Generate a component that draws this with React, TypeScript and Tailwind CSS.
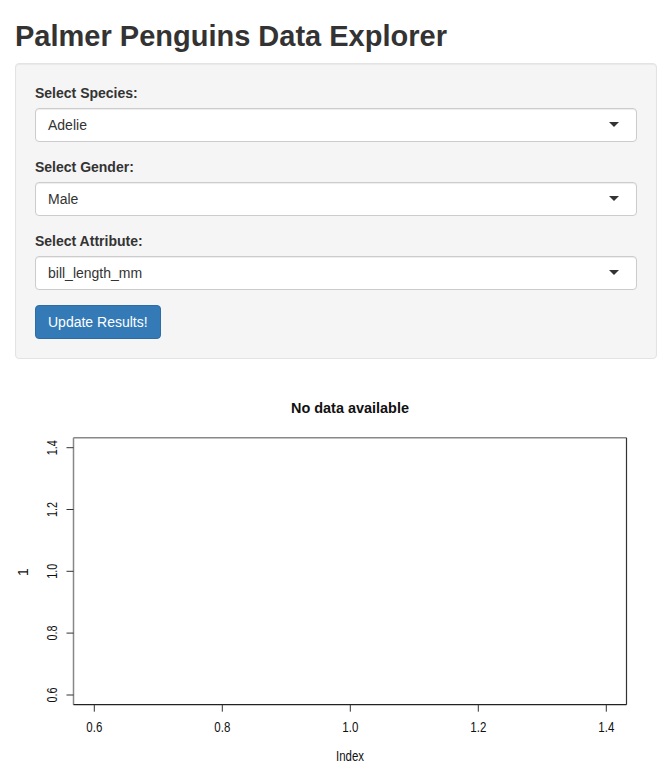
import React, { useState } from 'react';

const font = { fontFamily: '"Liberation Sans", Arial, sans-serif' };

const SelectBox: React.FC<{ label: string; value: string }> = ({ label, value }) => (
    <div className="mb-[15px]">
        <label className="block mb-[5px] text-[14px] leading-[20px] font-bold text-[#333]">{label}</label>
        <div className="relative h-[34px] bg-white border border-[#ccc] rounded-[4px] px-[12px] py-[6px] shadow-[inset_0_1px_1px_rgba(0,0,0,0.075)]">
            <span className="block text-[14px] leading-[20px] text-[#333]">{value}</span>
            <span className="absolute right-[17px] top-1/2 -mt-[3px] w-0 h-0 border-t-[5px] border-t-[#333] border-x-[5px] border-x-transparent"></span>
        </div>
    </div>
);

const yTicks = [
    { y: 68.7, t: '1.4' },
    { y: 130.5, t: '1.2' },
    { y: 192.3, t: '1.0' },
    { y: 254.1, t: '0.8' },
    { y: 316, t: '0.6' },
];

const xTicks = [
    { x: 79.3, t: '0.6' },
    { x: 207.3, t: '0.8' },
    { x: 335.3, t: '1.0' },
    { x: 463.3, t: '1.2' },
    { x: 591.3, t: '1.4' },
];

const EmptyPlot: React.FC = () => (
    <svg width="642" height="400" viewBox="0 0 642 400" className="block">
        <g fontFamily='"Liberation Sans", Arial, sans-serif' fill="#111">
            <text x="335" y="34" fontSize="15" fontWeight="bold" textAnchor="middle" textLength="118" lengthAdjust="spacingAndGlyphs">
                No data available
            </text>
            {/* plot box */}
            <line x1="58.5" y1="58.7" x2="611.5" y2="58.7" stroke="#888" strokeWidth="1.5" />
            <line x1="58.5" y1="58.7" x2="58.5" y2="325.7" stroke="#888" strokeWidth="1.5" />
            <line x1="58.5" y1="325.7" x2="611.5" y2="325.7" stroke="#222" strokeWidth="1.2" />
            <line x1="611.5" y1="58.7" x2="611.5" y2="325.7" stroke="#333" strokeWidth="1.2" />
            {yTicks.map((t) => (
                <g key={t.t}>
                    <line x1="51.5" y1={t.y} x2="58.5" y2={t.y} stroke="#333" strokeWidth="1" />
                    <text
                        x="0"
                        y="0"
                        fontSize="14"
                        textAnchor="middle"
                        textLength="15"
                        lengthAdjust="spacingAndGlyphs"
                        transform={`translate(42 ${t.y}) rotate(-90)`}
                    >
                        {t.t}
                    </text>
                </g>
            ))}
            {xTicks.map((t) => (
                <g key={t.t}>
                    <line x1={t.x} y1="325.7" x2={t.x} y2="332.7" stroke="#333" strokeWidth="1" />
                    <text x={t.x} y="353" fontSize="14" textAnchor="middle" textLength="16" lengthAdjust="spacingAndGlyphs">
                        {t.t}
                    </text>
                </g>
            ))}
            <text x="335" y="382" fontSize="14" textAnchor="middle" textLength="28" lengthAdjust="spacingAndGlyphs">
                Index
            </text>
            <text x="0" y="0" fontSize="14" textAnchor="middle" transform="translate(12.5 193) rotate(-90)">
                1
            </text>
        </g>
    </svg>
);

const App: React.FC = () => {
    const [species] = useState('Adelie');
    const [gender] = useState('Male');
    const [attribute] = useState('bill_length_mm');

    return (
        <div className="min-h-[779px] bg-white px-[15px]" style={font}>
            <h2 className="mt-[20px] mb-[10px] text-[29px] leading-[33px] font-bold text-[#333]">
                Palmer Penguins Data Explorer
            </h2>
            <div className="mb-[20px] p-[19px] pb-[4px] bg-[#f5f5f5] border border-[#e3e3e3] rounded-[4px] shadow-[inset_0_1px_1px_rgba(0,0,0,0.05)]">
                <SelectBox label="Select Species:" value={species} />
                <SelectBox label="Select Gender:" value={gender} />
                <SelectBox label="Select Attribute:" value={attribute} />
                <button className="mb-[15px] h-[34px] px-[12px] bg-[#337ab7] border border-[#2e6da4] rounded-[4px] text-white text-[14px] leading-[20px]">
                    Update Results!
                </button>
            </div>
            <EmptyPlot />
        </div>
    );
};

export default App;
